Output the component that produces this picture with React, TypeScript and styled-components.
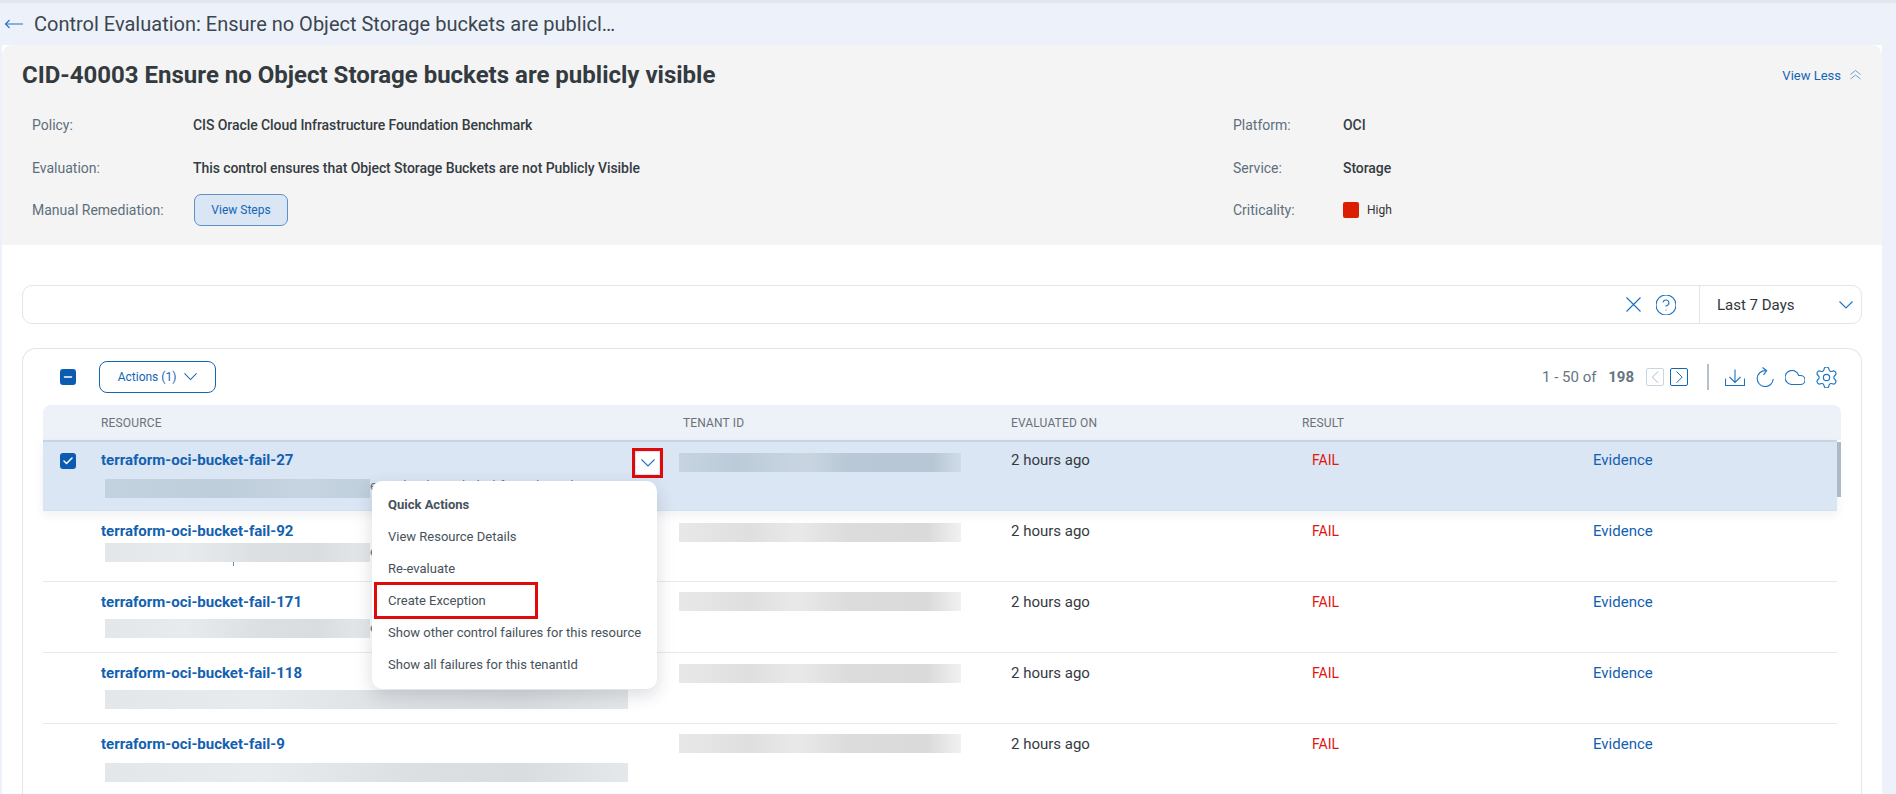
import React from "react";
import styled, { createGlobalStyle } from "styled-components";
import { CircleHelp, Cloud, Settings, Check, Minus } from "lucide-react";

const Global = createGlobalStyle`
  html, body { margin: 0; padding: 0; height: 100%; overflow: hidden; }
  body { font-family: Roboto, "Liberation Sans", sans-serif; background: #edf2fa; color: #333; }
  #root { height: 100%; }
  *, *::before, *::after { box-sizing: border-box; }
`;

const Page = styled.div`
  height: 794px;
  display: flex;
  flex-direction: column;
  background: #edf2fa;
  border-top: 3px solid #e3e6ec;
  overflow: hidden;
`;
const TopBar = styled.header`
  height: 42px;
  flex: none;
  display: flex;
  align-items: center;
  padding-left: 4px;
  gap: 10px;
`;
const PageTitle = styled.h1`
  margin: 0;
  font-size: 20px;
  font-weight: 400;
  color: #3c4650;
`;
const Main = styled.main`
  flex: 1;
  min-height: 0;
  width: 1880px;
  margin-left: 2px;
  background: #fff;
  display: flex;
  flex-direction: column;
`;
const Summary = styled.section`
  height: 200px;
  flex: none;
  background: #f4f4f4;
  border-radius: 10px 10px 0 0;
  padding: 15px 21px 0 20px;
`;
const SummaryHead = styled.div`
  display: flex;
  justify-content: space-between;
  align-items: center;
  height: 30px;
`;
const ControlTitle = styled.h2`
  margin: 0;
  font-size: 24px;
  font-weight: 700;
  color: #333a40;
`;
const ViewLess = styled.a`
  display: flex;
  align-items: center;
  gap: 9px;
  font-size: 13px;
  color: #1565b5;
`;
const InfoGrid = styled.div`
  margin-top: 14px;
  margin-left: 10px;
  display: grid;
  grid-template-columns: 161px 1040px 110px 1fr;
  grid-auto-rows: 42.5px;
  align-items: center;
`;
const InfoLabel = styled.span`
  font-size: 14px;
  color: #5d6f7c;
`;
const InfoValue = styled.span`
  font-size: 14px;
  font-weight: 500;
  letter-spacing: -0.07px;
  color: #353c42;
`;
const StepsButton = styled.button`
  width: 94px;
  height: 32px;
  margin-left: 1px;
  background: #dae6f4;
  border: 1px solid #5a90cb;
  border-radius: 7px;
  font: 400 12px Roboto, sans-serif;
  color: #1565b5;
  padding: 0;
`;
const Criticality = styled.span`
  display: flex;
  align-items: center;
  gap: 8px;
  font-size: 12px;
  color: #333;
`;
const Square = styled.i`
  width: 16px;
  height: 16px;
  border-radius: 2px;
  background: #dc1e00;
`;
const Content = styled.div`
  flex: 1;
  min-height: 0;
  display: flex;
  flex-direction: column;
  padding: 40px 20px 0;
  gap: 24px;
`;
const SearchBox = styled.div`
  flex: none;
  height: 39px;
  border: 1px solid #e1e6ea;
  border-radius: 10px;
  display: flex;
  align-items: center;
  justify-content: flex-end;
`;
const SearchIcons = styled.div`
  display: flex;
  align-items: center;
  gap: 15px;
  padding-right: 23px;
  color: #1e73c4;
  svg { display: block; }
`;
const RangeSelect = styled.div`
  width: 162px;
  height: 100%;
  border-left: 1px solid #e1e6ea;
  display: flex;
  align-items: center;
  justify-content: space-between;
  padding: 0 8px 0 17px;
  font-size: 15px;
  color: #2f363c;
`;
const RangeCaret = styled.span`
  display: flex;
  color: #1e73c4;
`;
const TableCard = styled.section`
  flex: 1;
  min-height: 0;
  border: 1px solid #e1e6ea;
  border-bottom: 0;
  border-radius: 14px 14px 0 0;
  padding: 0 20px;
  display: flex;
  flex-direction: column;
`;
const Toolbar = styled.div`
  height: 56px;
  flex: none;
  display: flex;
  align-items: center;
  padding: 0 4px 0 17px;
`;
const Checkbox = styled.span`
  width: 16px;
  height: 16px;
  border-radius: 3px;
  background: #0b5cb0;
  color: #fff;
  display: inline-flex;
  align-items: center;
  justify-content: center;
`;
const ActionsButton = styled.button`
  margin-left: 23px;
  width: 117px;
  height: 32px;
  border: 1px solid #1565b5;
  border-radius: 8px;
  background: #fff;
  color: #1565b5;
  font: 400 12px Roboto, sans-serif;
  display: flex;
  align-items: center;
  justify-content: center;
  gap: 8px;
  padding: 0;
`;
const Pager = styled.div`
  margin-left: auto;
  display: flex;
  align-items: center;
  color: #1e73c4;
`;
const PageCount = styled.span`
  font-size: 15px;
  color: #66757f;
  margin-right: 12px;
  b { margin-left: 8px; font-weight: 700; }
`;
const PageButton = styled.span<{ $off?: boolean }>`
  width: 18px;
  height: 18px;
  border: 1px solid ${(p) => (p.$off ? "#c9d6de" : "#1565b5")};
  color: ${(p) => (p.$off ? "#a9b8c2" : "#1565b5")};
  border-radius: 2px;
  margin-right: ${(p) => (p.$off ? 6 : 0)}px;
  display: inline-flex;
  align-items: center;
  justify-content: center;
`;
const VDivider = styled.span`
  width: 2px;
  height: 26px;
  margin: 0 16px 0 19px;
  background: #b5c1cc;
`;
const ToolIcons = styled.div`
  display: flex;
  align-items: center;
  gap: 11px;
  svg { display: block; }
`;
const columns = "58px 578px 332px 291px 291px 1fr";
const HeadRow = styled.div`
  height: 35px;
  flex: none;
  display: grid;
  grid-template-columns: ${columns};
  align-items: center;
  background: #edf2f9;
  border-radius: 8px 8px 0 0;
  font-size: 12px;
  letter-spacing: 0.15px;
  color: #6b7176;
`;
const HeadCell = styled.span<{ $pad?: number }>`
  padding-left: ${(p) => p.$pad ?? 0}px;
`;
const Body = styled.div`
  position: relative;
  flex: 1;
  min-height: 0;
  padding-right: 4px;
`;
const Row = styled.div<{ $selected?: boolean }>`
  position: relative;
  height: 71px;
  display: grid;
  grid-template-columns: ${columns};
  align-items: start;
  background: ${(p) => (p.$selected ? "#dae6f4" : "#fff")};
  border-bottom: 1px solid ${(p) => (p.$selected ? "#d3e0ed" : "#e7eaed")};
  z-index: ${(p) => (p.$selected ? 2 : 0)};
  box-shadow: ${(p) =>
    p.$selected ? "inset 0 2px 0 #c4d5e6, 0 4px 10px rgba(40,60,90,.07)" : "none"};
`;
const CheckCell = styled.div`
  padding: 12px 0 0 17px;
`;
const ResourceCell = styled.div`
  min-width: 0;
`;
const ResourceName = styled.a`
  display: block;
  margin-top: 11px;
  font-size: 15px;
  line-height: 18px;
  font-weight: 700;
  color: #1261b0;
`;
const BlurBar = styled.div<{ $width: number; $top: number; $dark?: boolean }>`
  height: 19px;
  width: ${(p) => p.$width}px;
  margin-top: ${(p) => p.$top}px;
`;
const ResourceBar = styled(BlurBar)`
  margin-left: 4px;
  background: ${(p) =>
    p.$dark
      ? "linear-gradient(90deg,#c3d2df,#bfcedb 45%,#c6d4e1 75%,#c0cfdc)"
      : "linear-gradient(90deg,#e3e7e9,#e7ebed 30%,#dcdfe2 60%,#d9dde0 80%,#e5e8ea)"};
`;
const TenantBar = styled(BlurBar)`
  background: ${(p) =>
    p.$dark
      ? "linear-gradient(90deg,#c6d4e1,#bccbd9 20%,#c9d6e2 45%,#b9c8d6 60%,#b8c7d5 90%,#cfdbe8)"
      : "linear-gradient(90deg,#e8e8e8,#dfdfdf 25%,#e9e9e9 42%,#dcdcdc 60%,#dadada 88%,#f1f1f1)"};
`;
const Peek = styled.span<{ $top: number }>`
  position: absolute;
  left: 327px;
  top: ${(p) => p.$top}px;
  font-size: 13px;
  letter-spacing: 0.4px;
  color: #66727d;
  white-space: nowrap;
`;
const Descender = styled.i`
  position: absolute;
  left: 190px;
  top: 51px;
  width: 1px;
  height: 4px;
  background: #6f88a8;
`;
const Cell = styled.div<{ $pad?: number; $color?: string; $size?: number }>`
  margin-top: 11px;
  padding-left: ${(p) => p.$pad ?? 0}px;
  font-size: ${(p) => p.$size ?? 15}px;
  line-height: 18px;
  color: ${(p) => p.$color ?? "#343a40"};
`;
const RowToggle = styled.div`
  position: absolute;
  left: 589px;
  top: 8px;
  width: 31px;
  height: 30px;
  border: 3px solid #e00a0a;
  padding: 1px;
`;
const ToggleInner = styled.span`
  display: flex;
  align-items: center;
  justify-content: center;
  width: 100%;
  height: 100%;
  border-radius: 2px;
  background: #fff;
  color: #1e73c4;
`;
const Menu = styled.div`
  position: absolute;
  left: 329px;
  top: 41px;
  width: 285px;
  height: 208px;
  padding: 8px 0 8px;
  background: #fff;
  border-radius: 10px;
  box-shadow: 0 6px 18px rgba(30,40,60,.16);
  z-index: 5;
`;
const MenuItem = styled.div<{ $head?: boolean; $marked?: boolean }>`
  position: relative;
  height: 32px;
  line-height: 32px;
  padding-left: 16px;
  font-size: 13px;
  font-weight: ${(p) => (p.$head ? 700 : 400)};
  color: #47525c;
  white-space: nowrap;
  ${(p) =>
    p.$marked &&
    `&::after { content: ""; position: absolute; left: 2px; top: -3px; width: 164px; height: 37px; border: 3px solid #e00a0a; }`}
`;
const ScrollThumb = styled.div`
  position: absolute;
  right: 0;
  top: 2px;
  width: 4px;
  height: 55px;
  background: #adbac6;
  z-index: 3;
`;

const Chevron = ({ dir = "down", w = 14 }: { dir?: "down" | "left" | "right"; w?: number }) => {
  const d = {
    down: "M.5.5 7 7 13.5.5",
    left: "M7 .5.5 7 7 13.5",
    right: "M.5.5 7 7 .5 13.5",
  }[dir];
  const vb = dir === "down" ? "0 0 14 8" : "0 0 8 14";
  const h = dir === "down" ? (w * 8) / 14 : (w * 14) / 8;
  return (
    <svg width={w} height={h} viewBox={vb} fill="none" stroke="currentColor" strokeWidth="1.1">
      <path d={d} />
    </svg>
  );
};
const ChevronsUpIcon = () => (
  <svg width="11" height="10" viewBox="0 0 11 10" fill="none" stroke="#6f9ed1" strokeWidth="1">
    <path d="M.5 4.5 5.5.5l5 4M.5 9l5-4 5 4" />
  </svg>
);
const CloseIcon = () => (
  <svg width="15" height="15" viewBox="0 0 15 15" fill="none" stroke="#1e73c4" strokeWidth="1.2">
    <path d="M.5.5l14 14M14.5.5l-14 14" />
  </svg>
);
const BackArrow = () => (
  <svg width="20" height="10" viewBox="0 0 20 10" fill="none" stroke="#1e73c4" strokeWidth="1.1">
    <path d="M19 5H1.5M5.5 1 1.5 5l4 4" />
  </svg>
);
const DownloadIcon = () => (
  <svg width="20" height="17" viewBox="0 0 20 17" fill="none" stroke="#1e73c4" strokeWidth="1.1">
    <path d="M10 .5V13M4.5 8l5.5 5.5L15.5 8M.5 9.5v7h19v-7" />
  </svg>
);
const RefreshIcon = () => (
  <svg width="18" height="20" viewBox="0 0 18 20" fill="none" stroke="#1e73c4" strokeWidth="1.1">
    <path d="M9.5 3.6a8 8 0 1 0 7.7 8.4M6.5.5l4.2 3.2L7.5 7.8" />
  </svg>
);

type RowData = { name: string; bar: number; barTop: number; tenantTop: number };
const rows: RowData[] = [
  { name: "terraform-oci-bucket-fail-27", bar: 265, barTop: 10, tenantTop: 13 },
  { name: "terraform-oci-bucket-fail-92", bar: 265, barTop: 3, tenantTop: 12 },
  { name: "terraform-oci-bucket-fail-171", bar: 265, barTop: 8, tenantTop: 10 },
  { name: "terraform-oci-bucket-fail-118", bar: 523, barTop: 8, tenantTop: 11 },
  { name: "terraform-oci-bucket-fail-9", bar: 523, barTop: 10, tenantTop: 10 },
];

export default function App() {
  return (
    <Page>
      <Global />
      <TopBar>
        <BackArrow />
        <PageTitle>Control Evaluation: Ensure no Object Storage buckets are publicl…</PageTitle>
      </TopBar>
      <Main>
        <Summary>
          <SummaryHead>
            <ControlTitle>CID-40003 Ensure no Object Storage buckets are publicly visible</ControlTitle>
            <ViewLess>
              View Less <ChevronsUpIcon />
            </ViewLess>
          </SummaryHead>
          <InfoGrid>
            <InfoLabel>Policy:</InfoLabel>
            <InfoValue>CIS Oracle Cloud Infrastructure Foundation Benchmark</InfoValue>
            <InfoLabel>Platform:</InfoLabel>
            <InfoValue>OCI</InfoValue>
            <InfoLabel>Evaluation:</InfoLabel>
            <InfoValue>This control ensures that Object Storage Buckets are not Publicly Visible</InfoValue>
            <InfoLabel>Service:</InfoLabel>
            <InfoValue>Storage</InfoValue>
            <InfoLabel>Manual Remediation:</InfoLabel>
            <div>
              <StepsButton>View Steps</StepsButton>
            </div>
            <InfoLabel>Criticality:</InfoLabel>
            <Criticality>
              <Square /> High
            </Criticality>
          </InfoGrid>
        </Summary>
        <Content>
          <SearchBox>
            <SearchIcons>
              <CloseIcon />
              <CircleHelp width={20} height={20} viewBox="2 2 20 20" strokeWidth={1.1} />
            </SearchIcons>
            <RangeSelect>
              Last 7 Days
              <RangeCaret>
                <Chevron />
              </RangeCaret>
            </RangeSelect>
          </SearchBox>
          <TableCard>
            <Toolbar>
              <Checkbox>
                <Minus size={12} strokeWidth={3} />
              </Checkbox>
              <ActionsButton>
                Actions (1) <Chevron w={13} />
              </ActionsButton>
              <Pager>
                <PageCount>
                  1 - 50 of <b>198</b>
                </PageCount>
                <PageButton $off>
                  <Chevron dir="left" w={7} />
                </PageButton>
                <PageButton>
                  <Chevron dir="right" w={7} />
                </PageButton>
                <VDivider />
                <ToolIcons>
                  <DownloadIcon />
                  <RefreshIcon />
                  <Cloud width={20} height={15} viewBox="2 4.5 20 15" strokeWidth={1.1} />
                  <Settings width={21} height={21} viewBox="2 2 20 20" strokeWidth={1.1} />
                </ToolIcons>
              </Pager>
            </Toolbar>
            <HeadRow>
              <span />
              <HeadCell>RESOURCE</HeadCell>
              <HeadCell $pad={4}>TENANT ID</HeadCell>
              <HeadCell>EVALUATED ON</HeadCell>
              <HeadCell>RESULT</HeadCell>
              <span />
            </HeadRow>
            <Body>
              <ScrollThumb />
              {rows.map((r, i) => (
                <Row key={r.name} $selected={i === 0}>
                  <CheckCell>
                    {i === 0 && (
                      <Checkbox>
                        <Check size={12} strokeWidth={3} />
                      </Checkbox>
                    )}
                  </CheckCell>
                  <ResourceCell>
                    <ResourceName>{r.name}</ResourceName>
                    <ResourceBar $width={r.bar} $top={r.barTop} $dark={i === 0} />
                  </ResourceCell>
                  <div>
                    <TenantBar $width={282} $top={r.tenantTop} $dark={i === 0} />
                  </div>
                  <Cell>2 hours ago</Cell>
                  <Cell $pad={10} $size={14} $color="#e0150f">FAIL</Cell>
                  <Cell $color="#1261b0">Evidence</Cell>
                  {i === 1 && <Descender />}
                  {i === 1 && <Peek $top={33}>e</Peek>}
                  {i === 2 && <Peek $top={38}>e</Peek>}
                  {i === 0 && (
                    <>
                      <Peek $top={38}>e 4/Cloud-Mardial Bl.for Ti-bee-nlet-in</Peek>
                      <RowToggle>
                        <ToggleInner>
                          <Chevron />
                        </ToggleInner>
                      </RowToggle>
                      <Menu>
                        <MenuItem $head>Quick Actions</MenuItem>
                        <MenuItem>View Resource Details</MenuItem>
                        <MenuItem>Re-evaluate</MenuItem>
                        <MenuItem $marked>Create Exception</MenuItem>
                        <MenuItem>Show other control failures for this resource</MenuItem>
                        <MenuItem>Show all failures for this tenantId</MenuItem>
                      </Menu>
                    </>
                  )}
                </Row>
              ))}
            </Body>
          </TableCard>
        </Content>
      </Main>
    </Page>
  );
}
